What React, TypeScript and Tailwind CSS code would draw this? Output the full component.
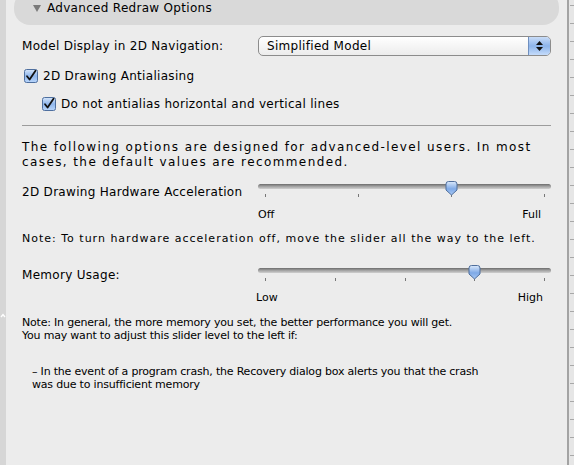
import React from 'react';

const font = { fontFamily: '"DejaVu Sans", "Liberation Sans", sans-serif' };

const CheckBox: React.FC = () => (
  <svg width="14" height="14" viewBox="0 0 14 14" className="shrink-0">
    <defs>
      <linearGradient id="cb" x1="0" y1="0" x2="0" y2="1">
        <stop offset="0" stopColor="#d6e6fa" />
        <stop offset="0.5" stopColor="#8fb6ec" />
        <stop offset="1" stopColor="#b9d6fb" />
      </linearGradient>
    </defs>
    <rect x="0.5" y="0.5" width="13" height="13" rx="2" fill="url(#cb)" stroke="#4e6f9f" />
    <path d="M3 7.2 L5.6 10.5 L11.5 1.8" fill="none" stroke="#111" strokeWidth="1.8" strokeLinecap="round" strokeLinejoin="round" />
  </svg>
);

const Thumb: React.FC = () => (
  <svg width="13" height="15" viewBox="0 0 13 15">
    <defs>
      <linearGradient id="th" x1="0" y1="0" x2="0" y2="1">
        <stop offset="0" stopColor="#dbe9fb" />
        <stop offset="0.55" stopColor="#7ea9e6" />
        <stop offset="1" stopColor="#a8c8f5" />
      </linearGradient>
    </defs>
    <path d="M1 3 Q1 0.5 3.5 0.5 L9.5 0.5 Q12 0.5 12 3 L12 9 L6.5 14 L1 9 Z" fill="url(#th)" stroke="#4f6e9c" />
  </svg>
);

const Slider: React.FC<{ ticks: number; value: number }> = ({ ticks, value }) => {
  const step = 279 / (ticks - 1);
  return (
    <div className="relative h-[18px] w-[293px]">
      <div className="mt-[4px] h-[5px] rounded-full bg-gradient-to-b from-[#6d6d6d] via-[#a4a4a4] to-[#d0d0d0]" />
      <div className="relative mt-[5px] h-[3px]">
        {Array.from({ length: ticks }).map((_, i) => (
          <div key={i} className="absolute top-0 h-[3px] w-px bg-[#777]" style={{ left: 7 + i * step }} />
        ))}
      </div>
      <div className="absolute top-[1px]" style={{ left: 7 + value * step - 6 }}>
        <Thumb />
      </div>
    </div>
  );
};

const App: React.FC = () => {
  return (
    <div className="flex h-[465px] w-[574px] overflow-hidden bg-[#ececec] text-black" style={font}>
      <div className="w-[6px] shrink-0 bg-[#d6d6d6] pt-[313px]">
        <svg width="6" height="5" viewBox="0 0 6 5">
          <path d="M1 4 L3 1.5 L5 4" fill="none" stroke="#fff" strokeWidth="1.4" />
        </svg>
      </div>

      <div className="flex-1 px-[16px] text-[12px] tracking-[0.3px]">
        <div className="-mx-[8px] -mt-[9px] flex h-[34px] items-center rounded-[16px] bg-[#d9d9d9] pl-[19px]">
          <svg width="8" height="7" viewBox="0 0 8 7" className="mr-[6px]">
            <path d="M0 0 L8 0 L4 7 Z" fill="#7a7a7a" />
          </svg>
          <span className="leading-none">Advanced Redraw Options</span>
        </div>

        <div className="mt-[11px] flex h-[20px] items-center">
          <span className="w-[236px]">Model Display in 2D Navigation:</span>
          <div className="flex h-[20px] flex-1 items-stretch overflow-hidden rounded-[5px] border border-[#8c8c8c] bg-gradient-to-b from-white to-[#ececec]">
            <span className="flex-1 pl-[8px] leading-[18px]">Simplified Model</span>
            <div className="flex w-[22px] flex-col items-center justify-center gap-[2px] border-l border-[#6f8fbf] bg-gradient-to-b from-[#c9dcf7] via-[#8db4ea] to-[#c5dcfb]">
              <svg width="7" height="4" viewBox="0 0 7 4"><path d="M0 4 L3.5 0 L7 4 Z" fill="#111" /></svg>
              <svg width="7" height="4" viewBox="0 0 7 4"><path d="M0 0 L7 0 L3.5 4 Z" fill="#111" /></svg>
            </div>
          </div>
        </div>

        <div className="mt-[12px] flex h-[16px] items-center gap-[5px] pl-[2px]">
          <CheckBox />
          <span>2D Drawing Antialiasing</span>
        </div>

        <div className="mt-[12px] flex h-[16px] items-center gap-[5px] pl-[20px]">
          <CheckBox />
          <span>Do not antialias horizontal and vertical lines</span>
        </div>

        <div className="mt-[13px] h-px bg-[#9c9c9c]" />

        <p className="mt-[14px] whitespace-nowrap leading-[15px] tracking-[1.4px]">
          The following options are designed for advanced-level users. In most
          <br />
          cases, the default values are recommended.
        </p>

        <div className="mt-[10px] flex">
          <span className="w-[236px] pt-[5px] leading-[14px]">2D Drawing Hardware Acceleration</span>
          <Slider ticks={4} value={2} />
        </div>

        <div className="mt-[9px] flex justify-between pl-[236px] pr-[10px] text-[11px] leading-[13px] tracking-normal">
          <span>Off</span>
          <span>Full</span>
        </div>

        <p className="mt-[11px] whitespace-nowrap text-[11px] leading-[13px] tracking-[1px]">
          Note: To turn hardware acceleration off, move the slider all the way to the left.
        </p>

        <div className="mt-[19px] flex">
          <span className="w-[236px] pt-[4px] leading-[14px]">Memory Usage:</span>
          <Slider ticks={5} value={3} />
        </div>

        <div className="mt-[9px] flex justify-between pl-[234px] pr-[8px] text-[11px] leading-[13px] tracking-normal">
          <span>Low</span>
          <span>High</span>
        </div>

        <p className="mt-[12px] whitespace-nowrap text-[11px] leading-[13px] tracking-[-0.2px]">
          Note: In general, the more memory you set, the better performance you will get.
          <br />
          You may want to adjust this slider level to the left if:
        </p>

        <p className="mt-[23px] whitespace-nowrap pl-[10px] text-[11px] leading-[13px] tracking-[-0.2px]">
          – In the event of a program crash, the Recovery dialog box alerts you that the crash
          <br />
          was due to insufficient memory
        </p>
      </div>

      <div className="flex w-[7px] shrink-0 flex-col gap-[17px] border-l-2 border-[#a3a3a3] bg-[#e6e6e6] pt-[5px]">
        {Array.from({ length: 26 }).map((_, i) => (
          <div key={i} className="ml-auto h-px w-[4px] bg-[#a8a8a8]" />
        ))}
      </div>
    </div>
  );
};

export default App;
